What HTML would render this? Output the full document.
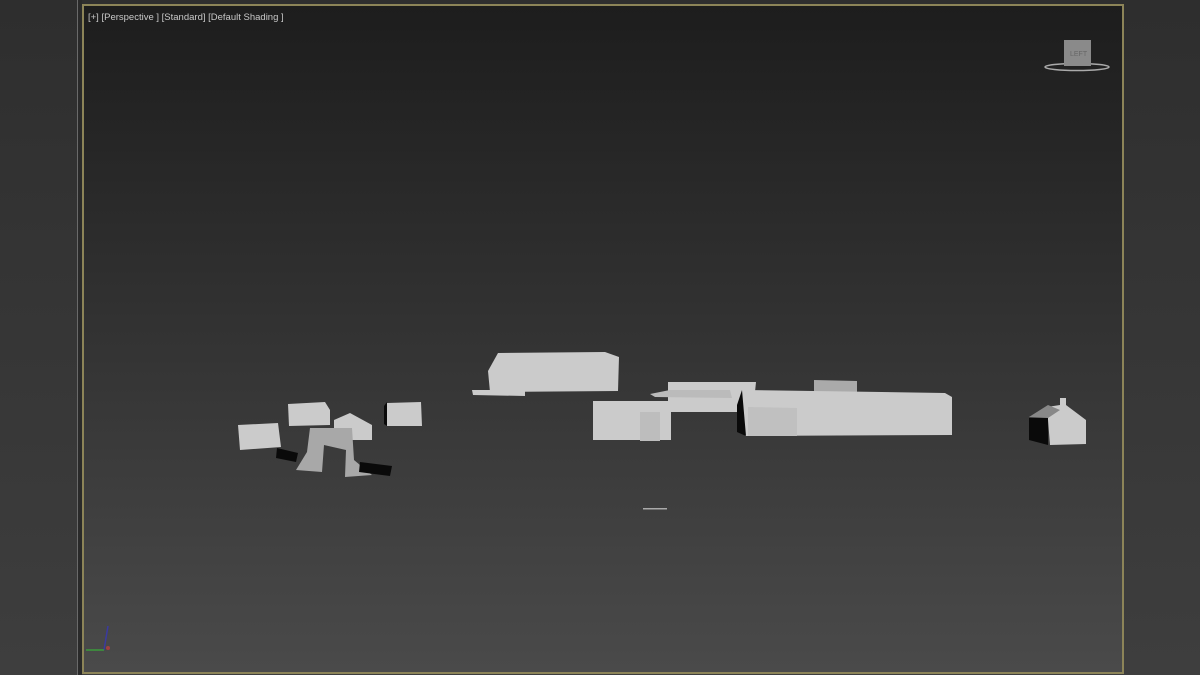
<!DOCTYPE html>
<html><head><style>
html,body{margin:0;padding:0;width:1200px;height:675px;overflow:hidden;background:#353535;}
svg{display:block}
</style></head><body>
<svg width="1200" height="675" viewBox="0 0 1200 675" xmlns="http://www.w3.org/2000/svg">
<defs>
<linearGradient id="vp" x1="0" y1="0" x2="0" y2="1">
<stop offset="0" stop-color="#1d1d1d"/><stop offset="0.5" stop-color="#333"/><stop offset="1" stop-color="#4a4a4a"/>
</linearGradient>
<linearGradient id="side" x1="0" y1="0" x2="0" y2="1">
<stop offset="0" stop-color="#2e2e2e"/><stop offset="1" stop-color="#3e3e3e"/>
</linearGradient>
</defs>
<rect x="0" y="0" width="1200" height="675" fill="url(#side)"/>
<rect x="77" y="0" width="1" height="675" fill="#6a6a6a"/>
<rect x="78" y="0" width="4" height="675" fill="#2a2a2a"/>
<rect x="82" y="4" width="1042" height="670" fill="#8c8458"/>
<rect x="84" y="6" width="1038" height="666" fill="url(#vp)"/>
<text x="88" y="20" font-family="Liberation Sans, sans-serif" font-size="9.5" fill="#c8c8c8">[+] [Perspective ] [Standard] [Default Shading ]</text>
<ellipse cx="1077" cy="67" rx="32" ry="3.5" fill="none" stroke="#aaa" stroke-width="1.5"/>
<rect x="1064" y="40" width="27" height="26" fill="#8a8a8a"/>
<text x="1070" y="56" font-family="Liberation Sans, sans-serif" font-size="7" fill="#666">LEFT</text>
<line x1="104" y1="650" x2="108" y2="626" stroke="#3a3aa0" stroke-width="1.5"/>
<line x1="86" y1="650" x2="104" y2="650" stroke="#3a9a3a" stroke-width="1.5"/>
<circle cx="108" cy="648" r="2" fill="#a04040"/>
<g fill="#cbcbcb">
<path d="M238 425 L278 423 L281 447 L240 450 Z"/>
<path d="M288 404 L325 402 L330 410 L330 425 L289 426 Z"/>
<path d="M334 420 L350 413 L372 425 L372 440 L334 440 Z"/>
<path d="M387 403 L421 402 L422 426 L387 426 Z"/>
<path d="M310 428 L352 428 L354 460 L372 475 L345 477 L346 450 L324 445 L322 472 L296 470 L307 452 Z" fill="#a8a8a8"/>
<path d="M488 371 L498 353 L605 352 L619 357 L618 391 L490 392 Z"/>
<path d="M472 390 L525 390 L525 396 L473 395 Z"/>
<path d="M593 401 L671 401 L671 440 L593 440 Z"/>
<path d="M640 412 L660 412 L660 441 L640 441 Z" fill="#bdbdbd"/>
<path d="M668 382 L756 382 L753 412 L668 412 Z"/>
<path d="M650 394 L670 390 L730 390 L732 398 L655 397 Z" fill="#bbb"/>
<path d="M814 380 L857 381 L857 392 L814 392 Z" fill="#aaa"/>
<path d="M742 390 L945 393 L952 397 L952 435 L745 436 Z"/>
<path d="M748 407 L797 408 L797 436 L748 436 Z" fill="#c0c0c0"/>
<path d="M1047 407 L1060 405 L1060 398 L1066 398 L1066 405 L1086 420 L1086 444 L1050 445 Z"/>
<path d="M1029 417 L1048 405 L1060 410 L1048 418 Z" fill="#888"/>
</g>
<g fill="#0a0a0a">
<path d="M277 448 L298 453 L296 462 L276 458 Z"/>
<path d="M360 462 L392 466 L390 476 L359 472 Z"/>
<path d="M384 406 L387 402 L387 426 L384 424 Z"/>
<path d="M737 405 L742 390 L746 436 L737 432 Z"/>
<path d="M1029 418 L1048 418 L1048 445 L1029 440 Z"/>
</g>
<rect x="643" y="508" width="24" height="1.5" fill="#aaa"/>
</svg>
</body></html>
